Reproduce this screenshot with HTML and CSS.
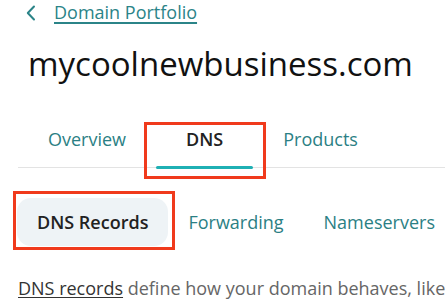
FILE: index.html
```html
<!DOCTYPE html>
<html lang="en">
<head>
<meta charset="utf-8">
<title>mycoolnewbusiness.com - DNS</title>
<link rel="stylesheet" href="styles.css">
</head>
<body>
<div class="page">
  <nav class="crumb">
    <svg class="chev" width="10" height="16" viewBox="0 0 10 16" aria-hidden="true"><polyline points="8,1.5 1.8,8 8,14.5" fill="none" stroke="#2b8488" stroke-width="2" stroke-linecap="round" stroke-linejoin="round"/></svg>
    <a class="crumb-link" href="#">Domain Portfolio</a>
  </nav>
  <h1 class="title">mycoolnewbusiness.com</h1>
  <div class="tabs">
    <a class="tab" href="#">Overview</a>
    <a class="tab tab-active mark" href="#">DNS</a>
    <a class="tab" href="#">Products</a>
  </div>
  <div class="subtabs">
    <a class="subtab subtab-active mark-sub" href="#">DNS Records</a>
    <a class="subtab" href="#">Forwarding</a>
    <a class="subtab" href="#">Nameservers</a>
  </div>
  <p class="intro"><a class="intro-link" href="#">DNS records</a> define how your domain behaves, like</p>
</div>
</body>
</html>
```
FILE: styles.css
```css
html, body {
  margin: 0;
  padding: 0;
  background: #ffffff;
  overflow: hidden;
}
.page {
  font-family: "Open Sans", "Liberation Sans", sans-serif;
  width: 445px;
  height: 307px;
  overflow: hidden;
  position: relative;
}
.crumb {
  display: flex;
  align-items: center;
  gap: 18px;
  padding-left: 26px;
  height: 24px;
  line-height: 24px;
}
.chev { display: block; margin-top: 2px; }
.crumb-link {
  font-size: 18px;
  font-weight: 500;
  color: #2b8488;
  text-decoration: underline;
  text-underline-offset: 3px;
  text-decoration-thickness: 1.5px;
}
.title {
  margin: 20px 0 0 28px;
  font-size: 33px;
  line-height: 40px;
  font-weight: 400;
  color: #111111;
  white-space: nowrap;
}
.tabs {
  display: flex;
  margin: 31px 0 0 18px;
  border-bottom: 1px solid #e3e3e3;
}
.tab {
  position: relative;
  padding: 12px 30px 16px;
  font-size: 18px;
  line-height: 24px;
  font-weight: 500;
  color: #2b7f84;
  text-decoration: none;
}
.tab-active {
  color: #222222;
  font-weight: 600;
}
.tab-active::after {
  content: "";
  position: absolute;
  left: 0;
  right: 0;
  bottom: -2px;
  height: 3px;
  border-radius: 2px;
  background: #1fb0b4;
}
.mark::before {
  content: "";
  position: absolute;
  left: -12px;
  right: -13px;
  top: 7px;
  bottom: -12px;
  border: 3px solid #f03a1c;
}
.subtabs {
  display: flex;
  margin: 30px 0 0 17px;
}
.subtab {
  position: relative;
  padding: 12px 20px;
  border-radius: 14px;
  font-size: 18px;
  line-height: 24px;
  font-weight: 500;
  color: #2b7f84;
  text-decoration: none;
  white-space: nowrap;
}
.subtab-active {
  background: #eef3f6;
  color: #222222;
  font-weight: 600;
}
.mark-sub::before {
  content: "";
  position: absolute;
  left: -4px;
  right: -7px;
  top: -7px;
  bottom: -4px;
  border: 3px solid #f03a1c;
}
.intro {
  margin: 30px 0 0 18px;
  font-size: 18px;
  line-height: 24px;
  color: #666666;
  white-space: nowrap;
}
.intro-link {
  color: #333333;
  text-decoration: underline;
  text-underline-offset: 2px;
}
```
